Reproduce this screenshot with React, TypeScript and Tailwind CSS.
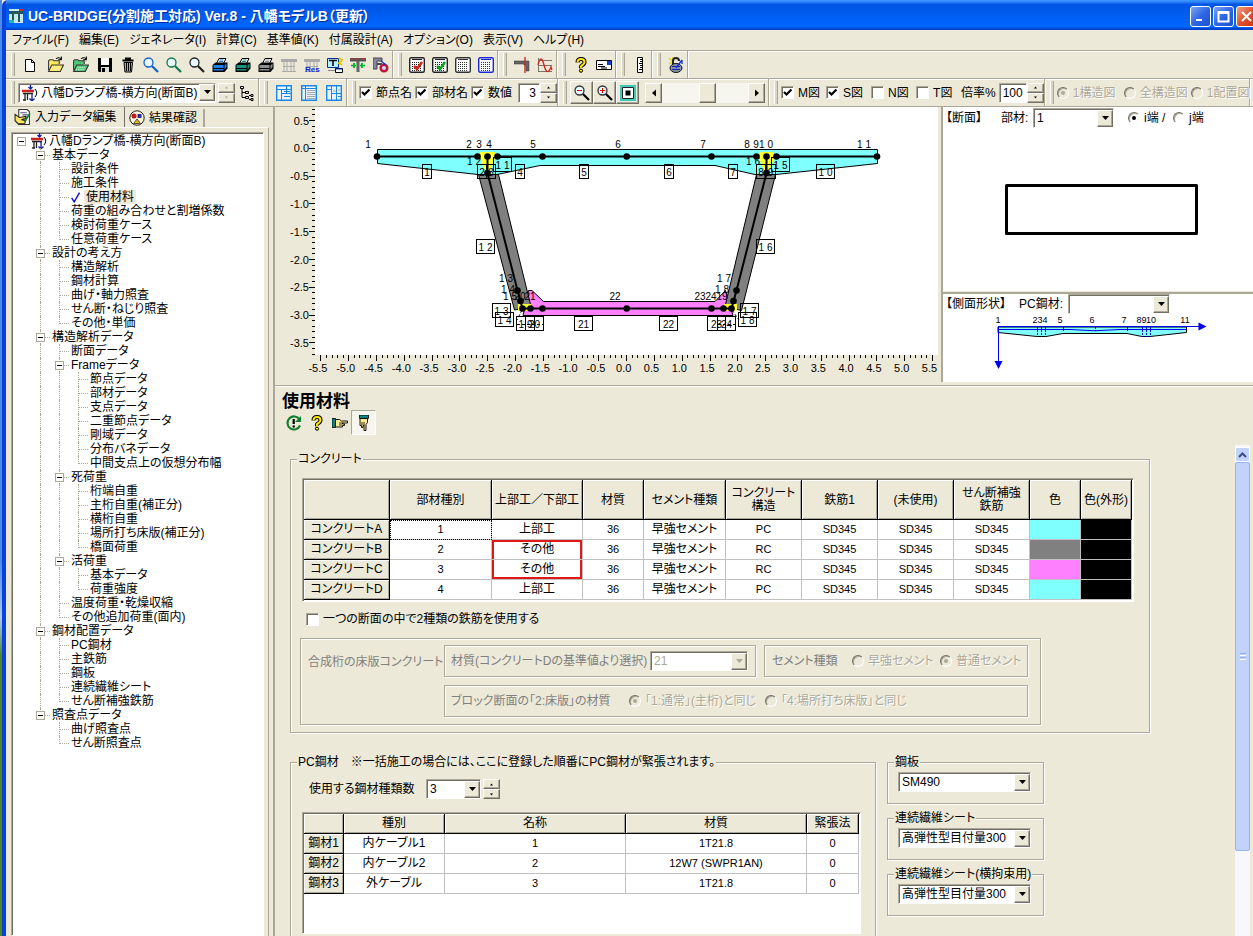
import { Fragment, ReactNode } from "react";
import clsx from "clsx";

const SUNKEN =
  "border border-t-[#aca899] border-l-[#aca899] border-b-white border-r-white shadow-[inset_1px_1px_0_#716f64]";
const RAISED =
  "border border-t-white border-l-white border-b-[#716f64] border-r-[#716f64] shadow-[inset_-1px_-1px_0_#aca899]";
const ETCHED =
  "border border-[#aca899] shadow-[1px_1px_0_#fff,inset_1px_1px_0_#fff]";
const DISABLED = "text-[#aca899] [text-shadow:1px_1px_0_#fff]";

/* ---------- icons ---------- */

const Svg = ({ children, size = 16 }: { children: ReactNode; size?: number }) => (
  <svg
    width={size}
    height={size}
    viewBox="0 0 16 16"
    fill="none"
    className="shrink-0"
    aria-hidden="true"
  >
    {children}
  </svg>
);

const NewIcon = () => (
  <Svg>
    <path d="M2.500 2.500h6l3 3v9h-9z" fill="#fff" stroke="#000" />
    <path d="M8.500 2.500v3h3" stroke="#000" />
  </Svg>
);

const FolderIcon = ({ fill }: { fill: string }) => (
  <Svg size={17}>
    <path d="M1.500 13.500v-9l1-1h3l1 1h5v3" fill={fill} stroke="#333" />
    <path d="M1.500 14.500l3-6h11l-3 6z" fill={fill} stroke="#333" />
    <path d="M8.500 2.500q3-2 5 .5m0-2.500v3h-3" stroke="#000" />
    <path d="M5 10.500h8M4 12.500h8" stroke="#fff" strokeDasharray="1 1" />
  </Svg>
);

const SaveIcon = () => (
  <Svg>
    <path d="M1 1h14v14H2l-1-1z" fill="#000" />
    <path d="M4 1h8v7H4z" fill="#fff" />
    <path d="M4 10h8v5H4z" fill="#ddd" />
    <path d="M5 11h3v4H5z" fill="#000" />
  </Svg>
);

const TrashIcon = () => (
  <Svg>
    <path d="M6 2.500v-1h4v1M2.500 3.500h11" stroke="#000" strokeWidth="2" />
    <path d="M4 5.500h8.500l-1 9.500H5z" fill="#aaa" stroke="#000" />
    <path d="M6.500 6v8M8.500 6v8M10.500 6v8" stroke="#000" />
  </Svg>
);

const LensIcon = ({ color, sign }: { color: string; sign?: "+" | "-" }) => (
  <Svg>
    <circle cx="5.500" cy="5.500" r="4.500" fill="#e8f8ff" stroke={color} strokeWidth="1.300" />
    <path d="M9 9l6 6" stroke={sign ? "#000" : color} strokeWidth="2.200" />
    {sign && <path d="M3 5.500h5" stroke="#e00000" />}
    {sign === "+" && <path d="M5.500 3v5" stroke="#e00000" />}
  </Svg>
);

const PrinterIcon = ({ color }: { color: string }) => (
  <Svg>
    <path d="M4.500 6.500l2.500-5h7l-2.500 5z" fill="#fff" stroke="#000" />
    <path d="M7.500 3h4M7 4.500h4" stroke={color} />
    <path d="M.5 8l3-2.500H15.500v6L12.500 15H.5z" fill="#000" />
    <path d="M1.500 8h10v3h-10zM1.500 12h10v1.500h-10z" fill={color} />
    <path d="M12.500 8.500l2-2V10l-2 2.500z" fill={color} />
  </Svg>
);

const PierIcon = ({ label }: { label?: string }) => (
  <Svg>
    <path d="M0 2h16v3H0z" fill="#aaa" />
    <path d="M3 5v10M6 5v10M10 5v10M13 5v10M2 9.500h12M1 14.500h14" stroke="#aaa" />
    {label && (
      <text x="1" y="15" fontSize="8" fontWeight="bold" fill="#1030e0">
        {label}
      </text>
    )}
  </Svg>
);

const SectionTableIcon = () => (
  <Svg>
    <path d="M.5 1.500h11v9H.500z" fill="#b8f0ff" stroke="#0030a0" />
    <path d="M2 3.500h8M6 4v5" stroke="#000" strokeWidth="1.500" />
    <path d="M12 1l3 2-3 3 3 2" stroke="#e8c800" strokeWidth="2" />
    <path d="M1 13.500h7" stroke="#888" />
    <path d="M8.500 11.500h7v4h-7z" fill="#fff" stroke="#000" />
    <path d="M9 12h6" stroke="#0030e0" />
  </Svg>
);

const LoadIcon = () => (
  <Svg>
    <path d="M0 1h16v3.500H0z" fill="#555" />
    <path d="M0 2h16" stroke="#a04040" />
    <path d="M6.500 4h3v11h-3z" fill="#666" />
    <path d="M1 8.500h5M10 8.500h5" stroke="#00a020" strokeWidth="1.500" />
    <path d="M4 6v5M12 6v5" stroke="#00c030" strokeWidth="2" />
  </Svg>
);

const TendonIcon = () => (
  <Svg>
    <path d="M0 1h9v3H4v8H0z" fill="#889" stroke="#445" />
    <path d="M4 7h5" stroke="#445" strokeWidth="2" />
    <circle cx="11" cy="11" r="3.300" fill="#ccd8ff" stroke="#c01838" strokeWidth="2.500" />
    <path d="M8 4l5 4" stroke="#1030c0" strokeWidth="1.500" />
  </Svg>
);

const GridIcon = ({ color, mark }: { color: string; mark?: string }) => (
  <Svg>
    <rect x=".7" y=".7" width="14.600" height="14.600" rx="1.500" fill="#fff" stroke={color} strokeWidth="1.400" />
    <path d="M3 2.500h10" stroke={color} />
    <path
      d="M3 5.500h10M3 7.500h10M3 9.500h10M3 11.500h10M3 13.500h10"
      stroke={color}
      strokeDasharray="1 1"
    />
    {mark && <path d="M5 9l3 3 5-7" stroke={mark} strokeWidth="2.500" />}
  </Svg>
);

const GirderCutIcon = () => (
  <Svg>
    <path d="M0 4h15v10h-3V9L9 7H0z" fill="#666" stroke="#333" strokeWidth=".5" />
    <path d="M11 0v16" stroke="#d02020" strokeWidth="1.300" />
  </Svg>
);

const WaveIcon = () => (
  <Svg>
    <path d="M1.500 1v14M1 8.500h14M1 14.500h14M1 3.500h14" stroke="#776" />
    <path d="M1 8q3-12 6 0t7 2l1 3" stroke="#d82020" strokeWidth="1.300" />
  </Svg>
);

const QuestionIcon = () => (
  <Svg>
    <path d="M4.500 5.500q0-3.500 3.500-3.500t3.500 3q0 2-2 3T8 11" stroke="#000" strokeWidth="4" />
    <path d="M4.500 5.500q0-3.500 3.500-3.500t3.500 3q0 2-2 3T8 11" stroke="#ffe800" strokeWidth="2" />
    <circle cx="8" cy="13.700" r="1.600" fill="#ffe800" stroke="#000" />
  </Svg>
);

const MailIcon = () => (
  <Svg>
    <path d="M.5 3.500h15v9H.500z" fill="#fff" stroke="#000" />
    <path d="M11 4h4v4h-4z" fill="#1040d0" />
    <path d="M2 7.500h5M2 9.500h7M5 11h6" stroke="#000" />
  </Svg>
);

const RulerIcon = () => (
  <Svg>
    <path d="M5.500.5h5v15h-5z" fill="#fff" stroke="#000" />
    <path d="M8 2.500h2M8 4.500h2M7 6.500h3M8 8.500h2M8 10.500h2M7 12.500h3" stroke="#000" />
  </Svg>
);

const LockIcon = () => (
  <Svg>
    <path d="M1 1l4 4M1 6h3M5 0v3" stroke="#e8d800" strokeWidth="1.500" />
    <path d="M5 8V4q0-3 3-3t3 3" stroke="#222" strokeWidth="2" />
    <ellipse cx="8" cy="11" rx="6" ry="4.500" fill="#8890a8" stroke="#111" />
    <path d="M4 9.500h8M4 12.500h8" stroke="#1020b0" />
    <path d="M8 11l6-8M14 3v4" stroke="#1030e0" strokeWidth="1.300" />
  </Svg>
);

const BridgeIcon = () => (
  <Svg>
    <path d="M0 6h12" stroke="#d02020" strokeWidth="2.500" />
    <path d="M1 8.500h10M3 9v6M5.500 9v6M1 15h3" stroke="#222" strokeWidth="1.300" />
    <path d="M8.500 0v4m-2-2l2 2 2-2M10 9v7m-2.500-2.500L10 16l2.500-2.500" stroke="#1020a0" strokeWidth="1.300" />
    <path d="M13 4q3.500 4 0 8" stroke="#000" />
  </Svg>
);

const HierarchyIcon = () => (
  <Svg>
    <path d="M1.500 1.500h3v2h-3zM6.500 6.500h3v2h-3zM6.500 11.500h3v2h-3zM12 9.500h2v2h-2zM12 13.500h2v2h-2z" stroke="#000" />
    <path d="M3 4v8.500h3M3 7.500h3M10 10.500h2M10 14.500h2" stroke="#000" />
  </Svg>
);

const LayoutIcon = ({ lines, red }: { lines: string; red?: string }) => (
  <Svg>
    <path d="M.7.700h14.600v14.600H.700z" fill="#e8f4ff" stroke="#1c86e8" strokeWidth="1.400" />
    <path d={lines} stroke="#1c86e8" />
    {red && <path d={red} stroke="#a0a8b0" />}
  </Svg>
);

const EditIcon = () => (
  <Svg size={17}>
    <path d="M4.500.5h8l2 2v12h-10z" fill="#fff" stroke="#333" />
    <path d="M6 3.500h6M8 5.500h5M9 7.500h4" stroke="#557" />
    <path d="M1 5l4 3 6-1v2l-4 1 4 1-1 3H4l-3-3z" fill="#ffe060" stroke="#222" />
    <path d="M10 12l5-8" stroke="#108020" strokeWidth="1.500" />
  </Svg>
);

const ResultIcon = () => (
  <Svg>
    <circle cx="8" cy="8" r="7.200" fill="#fff4d8" stroke="#222" />
    <circle cx="5" cy="6" r="2.500" fill="#c01818" />
    <path d="M8.500 4h4v4h-4z" fill="#2030b0" />
    <path d="M8 9l3.500 4.500h-7z" fill="#e8b020" stroke="#222" strokeWidth=".7" />
  </Svg>
);

const RefreshIcon = () => (
  <Svg>
    <path d="M13.500 4.500A6.500 6.500 0 1 0 14 10.500" stroke="#108030" strokeWidth="2.200" />
    <path d="M15 1v6H9z" fill="#108030" />
    <path d="M7.700 4v5" stroke="#000" strokeWidth="2.200" />
    <circle cx="7.700" cy="11.500" r="1.200" fill="#000" />
  </Svg>
);

const HandIcon = ({ down }: { down?: boolean }) => (
  <Svg>
    <g transform={down ? "rotate(90 8 8)" : undefined}>
      <path d="M0 3.500h3.500v9H0z" fill="#108080" stroke="#000" strokeWidth=".8" />
      <path
        d="M3.500 4.500h4l2 1.500h6v2h-5v1h2v1.500h-2V12h-7z"
        fill="#ffe890"
        stroke="#000"
        strokeWidth=".9"
      />
      <path d="M7 8h4M7 10h3" stroke="#000" strokeWidth=".8" />
    </g>
  </Svg>
);

/* ---------- controls ---------- */

const Arrow = ({ d }: { d: string }) => (
  <svg width="7" height="5" viewBox="0 0 7 5" fill="currentColor" aria-hidden="true">
    <path d={d} />
  </svg>
);

const Select = ({
  value,
  label,
  className,
  disabled,
  icon,
}: {
  value: string;
  label: string;
  className: string;
  disabled?: boolean;
  icon?: ReactNode;
}) => (
  <span className={clsx("grid h-5 shrink-0 items-center", className)}>
    <select
      aria-label={label}
      disabled={disabled}
      className={clsx(
        "col-start-1 row-start-1 h-5 w-full appearance-none bg-white pr-4 text-[12px] leading-4",
        SUNKEN,
        icon ? "pl-[22px]" : "pl-[3px]",
        disabled && "text-[#aca899]"
      )}
    >
      <option>{value}</option>
    </select>
    {icon && (
      <span className="pointer-events-none col-start-1 row-start-1 pl-1">
        {icon}
      </span>
    )}
    <span
      className={clsx(
        "pointer-events-none col-start-1 row-start-1 mr-px grid h-[17px] w-4 place-items-center justify-self-end bg-[#ece9d8]",
        RAISED,
        disabled && "text-[#aca899]"
      )}
    >
      <Arrow d="M0 0h7L3.500 4z" />
    </span>
  </span>
);

const Spinner = ({ label, disabled }: { label: string; disabled?: boolean }) => (
  <span className={clsx("flex w-[17px] flex-col", disabled && "text-[#aca899]")}>
    <button
      type="button"
      aria-label={`${label} +`}
      disabled={disabled}
      className={clsx("grid h-[10px] place-items-center", RAISED)}
    >
      <Arrow d="M2 3.500h3L3.500 1.500z" />
    </button>
    <button
      type="button"
      aria-label={`${label} -`}
      disabled={disabled}
      className={clsx("grid h-[10px] place-items-center", RAISED)}
    >
      <Arrow d="M2 1.500h3L3.500 3.500z" />
    </button>
  </span>
);

const Checkbox = ({
  text,
  checked,
  className,
}: {
  text: string;
  checked?: boolean;
  className?: string;
}) => (
  <label className={clsx("flex shrink-0 items-center gap-1 whitespace-nowrap", className)}>
    <span className="grid place-items-center">
      <input
        type="checkbox"
        defaultChecked={checked}
        className={clsx("peer col-start-1 row-start-1 size-[13px] appearance-none bg-white", SUNKEN)}
      />
      <svg
        width="9"
        height="9"
        viewBox="0 0 9 9"
        fill="none"
        className="pointer-events-none col-start-1 row-start-1 hidden peer-checked:block"
        aria-hidden="true"
      >
        <path d="M1 4l2.500 2.500L8.500 1.500" stroke="#000" strokeWidth="2.200" />
      </svg>
    </span>
    {text}
  </label>
);

const Radio = ({
  text,
  name,
  checked,
  disabled,
  className,
}: {
  text: string;
  name: string;
  checked?: boolean;
  disabled?: boolean;
  className?: string;
}) => (
  <label
    className={clsx(
      "flex shrink-0 items-center gap-1 whitespace-nowrap",
      disabled && DISABLED,
      className
    )}
  >
    <span className="grid place-items-center">
      <input
        type="radio"
        name={name}
        defaultChecked={checked}
        disabled={disabled}
        className={clsx(
          "peer col-start-1 row-start-1 size-3 appearance-none rounded-full border border-t-[#716f64] border-l-[#716f64] border-r-white border-b-white shadow-[inset_1px_1px_0_#aca899]",
          disabled ? "bg-[#ece9d8]" : "bg-white"
        )}
      />
      <span
        className={clsx(
          "pointer-events-none col-start-1 row-start-1 hidden size-1 rounded-full peer-checked:block",
          disabled ? "bg-[#aca899]" : "bg-black"
        )}
      />
    </span>
    {text}
  </label>
);

const GroupBox = ({
  title,
  className,
  bodyClassName,
  children,
}: {
  title: string;
  className: string;
  bodyClassName: string;
  children: ReactNode;
}) => (
  <fieldset className={clsx(ETCHED, className)}>
    <legend className="ml-[6px] bg-[#ece9d8] px-px leading-[14px] whitespace-nowrap">
      {title}
    </legend>
    <div className={bodyClassName}>{children}</div>
  </fieldset>
);

/* ---------- window chrome ---------- */

const CaptionButton = ({
  label,
  close,
  d,
}: {
  label: string;
  close?: boolean;
  d: string;
}) => (
  <button
    type="button"
    aria-label={label}
    className={clsx(
      "grid size-[21px] shrink-0 place-items-center rounded-[3px] border border-white",
      close
        ? "bg-linear-to-br from-[#f0a080] via-[#e0502c] to-[#c83008]"
        : "bg-linear-to-br from-[#7ba4f4] via-[#2f66e4] to-[#1d4fd0]"
    )}
  >
    <svg width="13" height="13" viewBox="0 0 13 13" fill="none" aria-hidden="true">
      <path d={d} stroke="#fff" strokeWidth="2" />
    </svg>
  </button>
);

const TitleBar = () => (
  <header className="flex h-[30px] shrink-0 items-center bg-linear-to-b from-[#3a93ff] from-3% via-[#0054e3] via-15% to-[#0066ff] to-85% pt-[2px] pl-[2px] text-white shadow-[inset_0_-3px_2px_-1px_#0040c8]">
    <Svg>
      <path d="M1 1h14v14H1z" fill="#c8e8e8" />
      <path d="M1 3h14v3H1zM4 6h2v8H4zM10 6h2v8h-2z" fill="#205860" />
      <path d="M1 12h5v3H1z" fill="#28b0c0" />
      <path d="M11 1h4v2h-4z" fill="#c03030" />
    </Svg>
    <h1 className="flex-1 pl-1 text-[14px] leading-5 font-bold whitespace-nowrap [text-shadow:1px_1px_0_#0030a0]">
      UC-BRIDGE(分割施工対応) Ver.8 - 八幡モデルB（更新）
    </h1>
    <div className="-mr-1 flex gap-[2px]">
      <CaptionButton label="最小化" d="M2 10h6" />
      <CaptionButton label="最大化" d="M1.500 2h10v9.500h-10zM1.500 3h10" />
      <CaptionButton label="閉じる" close d="M2 2l9 9M11 2l-9 9" />
    </div>
  </header>
);

const menuList = [
  "ファイル(F)",
  "編集(E)",
  "ジェネレータ(I)",
  "計算(C)",
  "基準値(K)",
  "付属設計(A)",
  "オプション(O)",
  "表示(V)",
  "ヘルプ(H)",
];

const MenuBar = () => (
  <nav className="flex h-5 shrink-0 items-center gap-[10px] pl-[6px]">
    {menuList.map((item) => (
      <button type="button" key={item} className="whitespace-nowrap">
        {item}
      </button>
    ))}
  </nav>
);

const ToolGroup = ({ children }: { children: ReactNode }) => (
  <div className="flex h-full shrink-0 items-center border-r border-[#aca899] pl-[5px] shadow-[1px_0_0_#fff]">
    <span className="mr-[3px] h-[23px] w-1 border-x border-x-white border-r-[#aca899] bg-[#d8d4c4]" />
    {children}
  </div>
);

const ToolButton = ({
  label,
  wide,
  children,
}: {
  label: string;
  wide?: boolean;
  children: ReactNode;
}) => (
  <button
    type="button"
    title={label}
    className={clsx("grid h-[23px] shrink-0 place-items-center", wide ? "w-[25px]" : "w-[23px]")}
  >
    {children}
  </button>
);

const toolGroups: { label: string; icon: ReactNode; wide?: boolean }[][] = [
  [
    { label: "新規作成", icon: <NewIcon />, wide: true },
    { label: "開く", icon: <FolderIcon fill="#ffe860" />, wide: true },
    { label: "追加読込", icon: <FolderIcon fill="#50c878" />, wide: true },
    { label: "保存", icon: <SaveIcon /> },
    { label: "削除", icon: <TrashIcon /> },
    { label: "入力データ表示", icon: <LensIcon color="#1060d0" /> },
    { label: "結果表示", icon: <LensIcon color="#107850" /> },
    { label: "表示", icon: <LensIcon color="#222222" /> },
    { label: "入力データ印刷", icon: <PrinterIcon color="#2080e8" /> },
    { label: "結果印刷", icon: <PrinterIcon color="#209080" /> },
    { label: "印刷", icon: <PrinterIcon color="#909090" /> },
    { label: "構造図", icon: <PierIcon /> },
    { label: "結果図", icon: <PierIcon label="Res" /> },
    { label: "断面表", icon: <SectionTableIcon /> },
    { label: "荷重図", icon: <LoadIcon /> },
    { label: "鋼材図", icon: <TendonIcon /> },
  ],
  [
    { label: "データチェック", icon: <GridIcon color="#222222" mark="#e02020" /> },
    { label: "データ編集", icon: <GridIcon color="#222222" mark="#10a020" /> },
    { label: "計算", icon: <GridIcon color="#333333" /> },
    { label: "一括計算", icon: <GridIcon color="#1828d8" /> },
  ],
  [
    { label: "断面", icon: <GirderCutIcon /> },
    { label: "断面力図", icon: <WaveIcon /> },
  ],
  [
    { label: "ヘルプ", icon: <QuestionIcon /> },
    { label: "問い合わせ", icon: <MailIcon /> },
  ],
  [{ label: "寸法", icon: <RulerIcon /> }],
  [{ label: "ライセンス", icon: <LockIcon /> }],
];

const MainToolBar = () => (
  <div className="flex h-7 shrink-0 border-t border-[#aca899] shadow-[inset_0_1px_0_#fff]">
    {toolGroups.map((group, index) => (
      <ToolGroup key={index}>
        {group.map((tool) => (
          <ToolButton key={tool.label} label={tool.label} wide={tool.wide}>
            {tool.icon}
          </ToolButton>
        ))}
      </ToolGroup>
    ))}
  </div>
);

const ViewToolBar = () => (
  <div className="flex h-7 shrink-0 border-t border-[#aca899] shadow-[inset_0_1px_0_#fff]">
    <ToolGroup>
      <Select
        label="モデル"
        value="八幡Dランプ橋-横方向(断面B)"
        className="mr-[2px] w-[198px]"
        icon={<BridgeIcon />}
      />
      <Spinner label="モデル" disabled />
      <ToolButton label="ツリー">
        <HierarchyIcon />
      </ToolButton>
    </ToolGroup>
    <ToolGroup>
      <ToolButton label="分割表示" wide>
        <LayoutIcon lines="M1 4.500h14M5.500 4v11M10.500 1v8M6 8.500h9M8 6.500h6M8 11.500h6" />
      </ToolButton>
      <ToolButton label="一覧表示" wide>
        <LayoutIcon
          lines="M4.500 1v14M1 3.500h14"
          red="M6 5.500h8M6 7.500h8M6 9.500h8M6 11.500h8M6 13.500h8"
        />
      </ToolButton>
      <ToolButton label="左右表示" wide>
        <LayoutIcon
          lines="M5.500 1v14M10.500 1v14M1 4.500h4M6 8.500h9M12 11.500h3"
          red="M7 6h3M12 5h2"
        />
      </ToolButton>
    </ToolGroup>
    <ToolGroup>
      <div className="flex items-center gap-[3px]">
        <Checkbox text="節点名" checked />
        <Checkbox text="部材名" checked />
        <Checkbox text="数値" checked />
      </div>
      <input
        aria-label="小数桁数"
        defaultValue="3"
        className={clsx("ml-[6px] h-5 w-[22px] bg-white pr-[3px] text-right", SUNKEN)}
      />
      <Spinner label="小数桁数" />
    </ToolGroup>
    <ToolGroup>
      <button type="button" title="縮小" className={clsx("grid size-[23px] place-items-center", RAISED)}>
        <LensIcon color="#333333" sign="-" />
      </button>
      <button type="button" title="拡大" className={clsx("grid size-[23px] place-items-center", RAISED)}>
        <LensIcon color="#333333" sign="+" />
      </button>
      <button type="button" title="全体" className={clsx("grid size-[23px] place-items-center", RAISED)}>
        <Svg>
          <path d="M1 1h14v14H1z" fill="#fff" stroke="#40c8b8" strokeWidth="2" />
          <path d="M2.500 2.500h11v11h-11z" stroke="#222" />
          <path d="M5.500 5.500h5v5h-5z" fill="#000" />
        </Svg>
      </button>
      <div className="mr-[3px] ml-[6px] flex h-5 w-[120px] items-stretch bg-[#f6f5ee]">
        <button type="button" aria-label="左へ" className={clsx("grid w-[17px] place-items-center bg-[#ece9d8]", RAISED)}>
          <Svg size={8}>
            <path d="M12 1v14L4 8z" fill="#000" />
          </Svg>
        </button>
        <span className="flex flex-1 justify-center pl-5">
          <span className={clsx("w-[17px] bg-[#ece9d8]", RAISED)} />
        </span>
        <button type="button" aria-label="右へ" className={clsx("ml-4 grid w-[17px] place-items-center bg-[#ece9d8]", RAISED)}>
          <Svg size={8}>
            <path d="M4 1v14l8-7z" fill="#000" />
          </Svg>
        </button>
      </div>
    </ToolGroup>
    <ToolGroup>
      <Checkbox text="M図" checked className="w-[45px]" />
      <Checkbox text="S図" checked className="w-[45px]" />
      <Checkbox text="N図" className="w-[45px]" />
      <Checkbox text="T図" className="w-[45px]" />
      <label className="flex items-center gap-[3px]">
        倍率%
        <input defaultValue="100" className={clsx("h-5 w-7 bg-white pr-[3px] text-right", SUNKEN)} />
      </label>
      <Spinner label="倍率" />
    </ToolGroup>
    <ToolGroup>
      <Radio name="figure" text="1構造図" checked disabled className="w-[67px]" />
      <Radio name="figure" text="全構造図" disabled className="w-[67px]" />
      <Radio name="figure" text="1配置図" disabled />
    </ToolGroup>
  </div>
);

/* ---------- tree ---------- */

type TreeNode = {
  name: string;
  selected?: boolean;
  items?: TreeNode[];
};

const leaves = (...names: string[]): TreeNode[] => names.map((name) => ({ name }));

const tree: TreeNode = {
  name: "八幡Dランプ橋-横方向(断面B)",
  items: [
    {
      name: "基本データ",
      items: [
        ...leaves("設計条件", "施工条件"),
        { name: "使用材料", selected: true },
        ...leaves("荷重の組み合わせと割増係数", "検討荷重ケース", "任意荷重ケース"),
      ],
    },
    {
      name: "設計の考え方",
      items: leaves("構造解析", "鋼材計算", "曲げ・軸力照査", "せん断・ねじり照査", "その他・単価"),
    },
    {
      name: "構造解析データ",
      items: [
        { name: "断面データ" },
        {
          name: "Frameデータ",
          items: leaves(
            "節点データ",
            "部材データ",
            "支点データ",
            "二重節点データ",
            "剛域データ",
            "分布バネデータ",
            "中間支点上の仮想分布幅"
          ),
        },
        {
          name: "死荷重",
          items: leaves("桁端自重", "主桁自重(補正分)", "横桁自重", "場所打ち床版(補正分)", "橋面荷重"),
        },
        { name: "活荷重", items: leaves("基本データ", "荷重強度") },
        ...leaves("温度荷重・乾燥収縮", "その他追加荷重(面内)"),
      ],
    },
    {
      name: "鋼材配置データ",
      items: leaves("PC鋼材", "主鉄筋", "鋼板", "連続繊維シート", "せん断補強鉄筋"),
    },
    { name: "照査点データ", items: leaves("曲げ照査点", "せん断照査点") },
  ],
};

// trail: for every ancestor, whether its vertical guide goes on below this row
const TreeItem = ({
  node,
  trail,
  last,
}: {
  node: TreeNode;
  trail: boolean[];
  last: boolean;
}) => {
  const root = trail.length === 0;
  return (
    <li>
      <div className="flex h-[14px] items-center">
        {trail.map((goesOn, index) => (
          <span key={index} className="h-full w-[19px] shrink-0">
            <span
              className={clsx("block h-full w-[10px]", goesOn && "border-r border-dotted border-[#aca899]")}
            />
          </span>
        ))}
        <span className="grid h-full w-[19px] shrink-0">
          {!root && (
            <span className="col-start-1 row-start-1 flex">
              <span
                className={clsx("w-[10px] border-r border-dotted border-[#aca899]", last ? "h-2" : "h-full")}
              />
              <span className="h-2 flex-1 border-b border-dotted border-[#aca899]" />
            </span>
          )}
          {node.items && (
            <button
              type="button"
              aria-label={`${node.name}を閉じる`}
              className="col-start-1 row-start-1 mt-px grid size-[9px] place-items-center place-self-center border border-[#aca899] bg-white"
            >
              <span className="h-px w-[5px] bg-black" />
            </button>
          )}
        </span>
        {root && <BridgeIcon />}
        {node.selected && (
          <Svg size={14}>
            <path d="M3 9l3 4.500L12 3" stroke="#1010c8" strokeWidth="1.600" />
          </Svg>
        )}
        <span
          className={clsx(
            "px-[2px] leading-[14px] whitespace-nowrap",
            node.selected && "ml-px bg-[#ece9d8]"
          )}
        >
          {node.name}
        </span>
      </div>
      {node.items && (
        <ul>
          {node.items.map((item, index) => (
            <TreeItem
              key={item.name}
              node={item}
              trail={root ? [false] : [...trail, !last]}
              last={index === node.items!.length - 1}
            />
          ))}
        </ul>
      )}
    </li>
  );
};

const Sidebar = () => (
  <aside className="flex w-[267px] shrink-0 flex-col pr-1 pl-px">
    <div className="flex h-5 shrink-0 items-end">
      <button
        type="button"
        className="flex h-full w-[118px] items-center gap-1 border-r border-[#716f64] pl-[7px] whitespace-nowrap"
      >
        <EditIcon />
        入力データ編集
      </button>
      <button
        type="button"
        className="flex h-[18px] w-[80px] items-center gap-1 border-r-2 border-[#aca899] pl-1 whitespace-nowrap"
      >
        <ResultIcon />
        結果確認
      </button>
    </div>
    <div className="flex min-h-0 flex-1 border-t border-r border-t-white border-r-[#aca899] pt-1 pr-1 pl-1">
      <ul className={clsx("w-full overflow-hidden bg-white pt-px", SUNKEN)}>
        <TreeItem node={tree} trail={[]} last />
      </ul>
    </div>
  </aside>
);

/* ---------- frame model ---------- */

const SCALE = 55.6;
const ORIGIN_X = 626.7;
const ORIGIN_Y = 148.3;

const range = (from: number, to: number) =>
  Array.from({ length: to - from + 1 }, (_, index) => from + index);

const topNodes = [377, 477.5, 487.5, 497.5, 542.5, 626.7, 711.5, 756.5, 766.5, 776.5, 877];
const nodes: [number, number][] = [
  ...topNodes.map((x): [number, number] => [x, 156.5]),
  ...[522.5, 530.5, 542.5, 626.7, 711.5, 723.5, 731.5].map((x): [number, number] => [x, 308.5]),
  [487.5, 173],
  [766.5, 173],
  [517.5, 290.5],
  [520.5, 301],
  [736.5, 290.5],
  [733.5, 301],
];

const nodeLabels: [string, number, number][] = [
  ["1", 368, 148],
  ["2", 469, 148],
  ["3", 479, 148],
  ["4", 489, 148],
  ["5", 533, 148],
  ["6", 618, 148],
  ["7", 703, 148],
  ["8", 747, 148],
  ["9", 756, 148],
  ["1 0", 766, 148],
  ["1 1", 864, 148],
  ["1 2", 474, 165],
  ["1 6", 753, 165],
  ["1 3", 506, 282],
  ["1 4", 508, 293],
  ["1 5", 510, 300],
  ["20", 520, 300],
  ["21", 530, 300],
  ["22", 615, 300],
  ["1 7", 724, 282],
  ["1 8", 722, 293],
  ["23", 700, 300],
  ["24", 711, 300],
  ["19", 722, 300],
];

// text, left, top, width
const members: [string, number, number, number][] = [
  ["1", 422.5, 164.5, 9],
  ["2", 477.5, 164.5, 9],
  ["3", 486.5, 164.5, 9],
  ["4", 515.5, 164.5, 9],
  ["5", 579.5, 164.5, 9],
  ["6", 664.5, 164.5, 9],
  ["7", 728.5, 164.5, 9],
  ["8", 756.5, 164.5, 9],
  ["9", 765.5, 164.5, 10],
  ["1 0", 816.5, 164.5, 18],
  ["1 1", 493.5, 157.5, 18],
  ["1 5", 771.5, 157.5, 18],
  ["1 2", 476.5, 239.5, 18],
  ["1 6", 756.5, 239.5, 18],
  ["1 3", 492.5, 303.5, 18],
  ["1 4", 495.5, 312.5, 18],
  ["1 9", 516.5, 316.5, 18],
  ["20", 525.5, 316.5, 18],
  ["21", 574.5, 316.5, 18],
  ["22", 659.5, 316.5, 18],
  ["23", 707.5, 316.5, 18],
  ["24", 717.5, 316.5, 18],
  ["1 7", 740.5, 303.5, 18],
  ["1 8", 738.5, 312.5, 18],
];

const FrameModel = () => (
  <svg
    width="663"
    height="275"
    viewBox="275 107 663 275"
    className="shrink-0 text-[11px]"
    role="img"
    aria-label="構造モデル図"
  >
    <path d="M275 107h40v248h623v27H275z" fill="#ece9d8" />

    {/* rulers */}
    <g stroke="#000" shapeRendering="crispEdges">
      {range(-37, 7).map((step) => {
        const y = ORIGIN_Y - (step / 10) * SCALE;
        return <path key={step} d={`M${step % 5 ? 312 : 309} ${y}H315`} />;
      })}
      {range(-55, 55).map((step) => {
        const x = ORIGIN_X + (step / 10) * SCALE;
        return <path key={step} d={`M${x} 355V${step % 5 ? 358 : 361}`} />;
      })}
    </g>
    {range(-7, 1).map((half) => (
      <text key={half} x="309" y={ORIGIN_Y - (half / 2) * SCALE + 4} textAnchor="end">
        {(half / 2).toFixed(1)}
      </text>
    ))}
    {range(-11, 11).map((half) => (
      <text key={half} x={ORIGIN_X + (half / 2) * SCALE - 3} y="372" textAnchor="middle">
        {(half / 2).toFixed(1)}
      </text>
    ))}

    {/* slabs and webs */}
    <g stroke="#000">
      <path
        d="M377.500 149.500H877.500V163.500L776 174.500H755L715 165.500H540L497 174.500H478L377.500 163.500z"
        fill="#80ffff"
      />
      <path
        d="M523 315.500L528.500 290.500H532L543.500 301.500H715L725.500 290.500L733 315.500z"
        fill="#ff80ff"
      />
      <path d="M478.500 174.500H498.500L531 306.500L514.500 310z" fill="#808080" />
      <path d="M756.500 174.500H775.500L741.500 310.500L725 306.500z" fill="#808080" />
    </g>
    <path d="M480 152h15v6l-6 16h-3l-6-16zM759 152h15v6l-6 16h-3l-6-16z" fill="#ffff30" />
    <path d="M518 304h13v7h-13zM724 304h13v7h-13z" fill="#ffff30" />

    {/* members */}
    <g stroke="#000" strokeWidth="2" fill="none">
      <path d="M377 156.500H477M497 156.500H757M776 156.500H877" />
      <path d="M522 308.500H732" />
      <path d="M487.500 156V173L517.500 290.500L522.500 308.500M766.500 156V173L736.500 290.500L731.500 308.500" />
    </g>
    <path
      d="M517 324.500h26M718 324.500h20M522 310l-5 10M732 310l7 10"
      stroke="#000"
      strokeDasharray="3 2"
    />
    {nodes.map(([x, y]) => (
      <circle key={`${x}-${y}`} cx={x} cy={y} r="3.300" />
    ))}

    <g className="text-[10px]">
      {nodeLabels.map(([text, x, y]) => (
        <text key={text} x={x} y={y} textAnchor="middle">
          {text}
        </text>
      ))}
      {members.map(([text, x, y, width]) => (
        <Fragment key={text}>
          <rect
            x={x}
            y={y}
            width={width}
            height="14"
            fill={text === "1 2" ? "#fff" : "none"}
            stroke="#000"
          />
          {text === "1 6" && <path d="M762 240h12v13h-15z" fill="#fff" />}
          <text x={x + width / 2} y={y + 11} textAnchor="middle">
            {text}
          </text>
        </Fragment>
      ))}
    </g>
  </svg>
);

const sideTicks: [string, number][] = [
  ["1", 998],
  ["2", 1035],
  ["3", 1040],
  ["4", 1045],
  ["5", 1060],
  ["6", 1092],
  ["7", 1124],
  ["8", 1139],
  ["9", 1144],
  ["10", 1151],
  ["11", 1185],
];

const SideShape = () => (
  <svg
    width="300"
    height="66"
    viewBox="943 314 300 66"
    className="text-[9px]"
    role="img"
    aria-label="側面形状図"
  >
    <path
      d="M998 327H1186.500V332.500L1150 336.500H1142L1127 333.500H1063L1046 336.500H1037L998 332.500z"
      fill="#80ffff"
      stroke="#000"
    />
    <path
      d="M1037.500 327v10M1041.500 327v10M1045.500 327v10M1063.500 327v4M1095.500 327v4M1127.500 327v4M1142.500 327v10M1146.500 327v10M1150.500 327v10"
      stroke="#1010c0"
      strokeDasharray="2 1"
    />
    <path d="M998 329.500H1070Q1095 332 1120 329.500H1187" stroke="#0000e0" fill="none" />
    <path d="M998.500 364V326.500H1200" stroke="#0000f0" fill="none" />
    <path d="M1206.500 326.500l-8-4v8zM998.500 369l-4-8h8z" fill="#0000f0" />
    {sideTicks.map(([text, x]) => (
      <text key={text} x={x} y="323" textAnchor="middle">
        {text}
      </text>
    ))}
  </svg>
);

const SectionPane = () => (
  <div className="flex w-[312px] shrink-0 flex-col border-l-2 border-[#aca899]">
    <section className="h-[184px] shrink-0 bg-white">
      <div className="flex h-[22px] items-center">
        <h2 className="w-[58px] shrink-0 pl-[3px]">【断面】</h2>
        <span className="w-8 shrink-0">部材:</span>
        <Select label="部材" value="1" className="w-[81px]" />
        <Radio name="end" text="i端 /" checked className="ml-[14px] w-[45px]" />
        <Radio name="end" text="j端" />
      </div>
      <svg width="300" height="160" viewBox="943 129 300 160" aria-hidden="true">
        <rect x="1006.500" y="185.500" width="190" height="48" fill="#fff" stroke="#000" strokeWidth="3" strokeLinejoin="round" />
      </svg>
    </section>
    <section className="mt-px flex-1 border-t-2 border-[#aca899] bg-white">
      <div className="flex h-5 items-center">
        <h2 className="w-[76px] shrink-0 pl-[3px]">【側面形状】</h2>
        <span className="w-[49px] shrink-0">PC鋼材:</span>
        <Select label="PC鋼材" value="" className="w-[102px]" />
      </div>
      <SideShape />
    </section>
  </div>
);

/* ---------- material form ---------- */

const TH =
  "border-r border-b border-black bg-[#ece9d8] p-0 text-center leading-[13px] font-normal shadow-[inset_1px_1px_0_#fff,inset_-1px_-1px_0_#aca899]";
const TD = "border-r border-b border-[#c0c0c0] p-0 text-center leading-[13px] whitespace-nowrap";

const concreteColumns = [
  { title: "", width: "w-[86px]" },
  { title: "部材種別", width: "w-[102px]" },
  { title: "上部工／下部工", width: "w-[91px]" },
  { title: "材質", width: "w-[61px]" },
  { title: "セメント種類", width: "w-[82px]" },
  { title: "コンクリート\n構造", width: "w-[76px]" },
  { title: "鉄筋1", width: "w-[76px]" },
  { title: "(未使用)", width: "w-[76px]" },
  { title: "せん断補強\n鉄筋", width: "w-[76px]" },
  { title: "色", width: "w-[51px]" },
  { title: "色(外形)", width: "w-[51px]" },
];

const concreteRows = [
  { name: "コンクリートA", part: "上部工", type: "PC", color: "bg-[#80ffff]" },
  { name: "コンクリートB", part: "その他", type: "RC", color: "bg-[#808080]" },
  { name: "コンクリートC", part: "その他", type: "RC", color: "bg-[#ff80ff]" },
  { name: "コンクリートD", part: "上部工", type: "PC", color: "bg-[#80ffff]" },
];

// red frame round the two cells that differ from the main structure
const partMark = [
  "",
  "shadow-[inset_2px_2px_0_#e01818,inset_-2px_0_0_#e01818]",
  "shadow-[inset_2px_-2px_0_#e01818,inset_-2px_0_0_#e01818]",
  "",
];

const ConcreteTable = () => (
  <div className={clsx("ml-[2px] w-[832px] bg-white p-px", SUNKEN)}>
    <table className="w-[828px] table-fixed border-separate border-spacing-0">
      <thead>
        <tr className="h-10">
          {concreteColumns.map(({ title, width }) => (
            <th key={title} className={clsx(TH, width, "pt-px whitespace-pre")}>
              {title}
            </th>
          ))}
        </tr>
      </thead>
      <tbody>
        {concreteRows.map((row, index) => (
          <tr key={row.name} className="h-5">
            <th scope="row" className={clsx(TH, "whitespace-nowrap")}>
              {row.name}
            </th>
            <td
              className={clsx(
                TD,
                "text-[11px]",
                index === 0 && "outline-1 -outline-offset-1 outline-black outline-dotted"
              )}
            >
              {index + 1}
            </td>
            <td className={clsx(TD, partMark[index])}>{row.part}</td>
            <td className={clsx(TD, "text-[11px]")}>36</td>
            <td className={TD}>早強セメント</td>
            <td className={clsx(TD, "text-[11px]")}>{row.type}</td>
            <td className={clsx(TD, "text-[11px]")}>SD345</td>
            <td className={clsx(TD, "text-[11px]")}>SD345</td>
            <td className={clsx(TD, "text-[11px]")}>SD345</td>
            <td className={clsx(TD, row.color)} />
            <td className={clsx(TD, "bg-black")} />
          </tr>
        ))}
      </tbody>
    </table>
  </div>
);

const DeckSettings = () => (
  <div className={clsx("mt-3 flex h-[87px] w-[741px] pt-[6px] pl-[7px] text-[#808080]", ETCHED)}>
    <span className="w-[136px] shrink-0 pt-[9px] leading-4 whitespace-nowrap">
      合成桁の床版コンクリート
    </span>
    <div className="flex w-[584px] flex-col gap-2">
      <div className="flex gap-2">
        <div className={clsx("flex h-8 w-[312px] items-center justify-between pr-[7px] pl-[6px] whitespace-nowrap", ETCHED)}>
          材質(コンクリートDの基準値より選択)
          <Select label="材質" value="21" disabled className="w-[98px]" />
        </div>
        <div className={clsx("flex h-8 flex-1 items-center pl-[7px]", ETCHED)}>
          <span className="w-[80px] shrink-0">セメント種類</span>
          <Radio name="cement" text="早強セメント" disabled className="w-[88px]" />
          <Radio name="cement" text="普通セメント" checked disabled />
        </div>
      </div>
      <div className={clsx("flex h-8 items-center pl-[6px]", ETCHED)}>
        <span className="w-[178px] shrink-0">ブロック断面の「2:床版」の材質</span>
        <Radio name="deck" text="「1:通常」(主桁)と同じ" checked disabled className="w-[136px]" />
        <Radio name="deck" text="「4:場所打ち床版」と同じ" disabled />
      </div>
    </div>
  </div>
);

const tendonColumns = [
  { title: "", width: "w-[40px]" },
  { title: "種別", width: "w-[101px]" },
  { title: "名称", width: "w-[181px]" },
  { title: "材質", width: "w-[181px]" },
  { title: "緊張法", width: "w-[52px]" },
];

const tendonRows = [
  ["鋼材1", "内ケーブル1", "1", "1T21.8", "0"],
  ["鋼材2", "内ケーブル2", "2", "12W7 (SWPR1AN)", "0"],
  ["鋼材3", "外ケーブル", "3", "1T21.8", "0"],
];

const TendonTable = () => (
  <div className={clsx("mt-[13px] ml-[2px] h-[122px] w-[559px] bg-white p-px", SUNKEN)}>
    <table className="w-[555px] table-fixed border-separate border-spacing-0">
      <thead>
        <tr className="h-5">
          {tendonColumns.map(({ title, width }) => (
            <th key={title} className={clsx(TH, width)}>
              {title}
            </th>
          ))}
        </tr>
      </thead>
      <tbody>
        {tendonRows.map(([name, kind, ...rest]) => (
          <tr key={name} className="h-5">
            <th scope="row" className={clsx(TH, "whitespace-nowrap")}>
              {name}
            </th>
            <td className={TD}>{kind}</td>
            {rest.map((value, index) => (
              <td key={index} className={clsx(TD, "text-[11px]")}>
                {value}
              </td>
            ))}
          </tr>
        ))}
      </tbody>
    </table>
  </div>
);

const sheets = [
  { title: "鋼板", value: "SM490" },
  { title: "連続繊維シート", value: "高弾性型目付量300" },
  { title: "連続繊維シート(横拘束用)", value: "高弾性型目付量300" },
];

const ScrollBar = () => (
  <div className="mr-[3px] flex w-[15px] shrink-0 flex-col bg-[#f8f8fc] pt-[2px]">
    <button
      type="button"
      aria-label="上へ"
      className="grid h-[15px] place-items-center rounded-xs border border-white bg-[#c1d3fb]"
    >
      <svg width="9" height="6" viewBox="0 0 9 6" fill="none" aria-hidden="true">
        <path d="M1 5l3.500-3.500L8 5" stroke="#3c5088" strokeWidth="2" />
      </svg>
    </button>
    <div className="grid h-[389px] place-items-center rounded-xs border border-[#98b4ee] bg-[#c1d3fb]">
      <span className="flex flex-col gap-px">
        <span className="h-px w-[6px] bg-[#8cb0f8]" />
        <span className="h-px w-[6px] bg-white" />
        <span className="h-px w-[6px] bg-[#8cb0f8]" />
        <span className="h-px w-[6px] bg-white" />
      </span>
    </div>
  </div>
);

const MaterialForm = () => (
  <main className="flex min-h-0 flex-1 flex-col border-t border-[#aca899] shadow-[inset_0_1px_0_#fff]">
    <div className="shrink-0 pt-[6px] pl-[7px]">
      <h2 className="text-[17px] leading-[19px] font-bold">使用材料</h2>
      <div className="flex h-[23px] items-center">
        <ToolButton label="更新">
          <RefreshIcon />
        </ToolButton>
        <ToolButton label="ヘルプ">
          <QuestionIcon />
        </ToolButton>
        <ToolButton label="次へ">
          <HandIcon />
        </ToolButton>
        <span className="border border-t-[#aca899] border-r-white border-b-white border-l-[#aca899] bg-[#f6f5ee]">
          <ToolButton label="固定">
            <HandIcon down />
          </ToolButton>
        </span>
      </div>
    </div>
    <div className="mt-[11px] flex min-h-0 flex-1">
      <form className="min-w-0 flex-1 overflow-hidden pt-[7px] pl-[15px]">
        <GroupBox title="コンクリート" className="w-[860px]" bodyClassName="pt-3 pb-[7px] pl-[9px]">
          <ConcreteTable />
          <Checkbox
            text="一つの断面の中で2種類の鉄筋を使用する"
            className="mt-[10px] ml-[6px] h-[14px]"
          />
          <DeckSettings />
        </GroupBox>
        <div className="mt-[22px] flex items-start gap-[11px]">
          <GroupBox
            title="PC鋼材　※一括施工の場合には、ここに登録した順番にPC鋼材が緊張されます。"
            className="w-[586px]"
            bodyClassName="pt-[10px] pb-5 pl-[9px]"
          >
            <div className="flex items-center gap-[2px] pl-[9px]">
              <span className="w-[115px]">使用する鋼材種類数</span>
              <Select label="使用する鋼材種類数" value="3" className="w-[55px]" />
              <Spinner label="使用する鋼材種類数" />
            </div>
            <TendonTable />
          </GroupBox>
          <div className="flex w-[157px] flex-col gap-[7px]">
            {sheets.map(({ title, value }) => (
              <GroupBox key={title} title={title} className="h-[49px]" bodyClassName="pt-[3px] pl-[10px]">
                <Select label={title} value={value} className="w-[133px]" />
              </GroupBox>
            ))}
          </div>
        </div>
      </form>
      <ScrollBar />
    </div>
  </main>
);

const App = () => (
  <div className="flex h-screen overflow-hidden bg-[#ece9d8] font-['Liberation_Sans','Noto_Sans_CJK_JP',sans-serif] text-[12px] leading-4 text-black [font-feature-settings:'palt']">
    <div className="w-[2px] shrink-0 bg-linear-to-b from-[#4a8ae8] from-60% via-[#a8c8f0] via-66% to-[#4c8a20] to-70%" />
    <div className="flex min-w-0 flex-1 flex-col overflow-hidden rounded-tl-md border-l-4 border-[#0842dc]">
      <TitleBar />
      <MenuBar />
      <MainToolBar />
      <ViewToolBar />
      <div className="flex min-h-0 flex-1 border-t border-[#aca899]">
        <Sidebar />
        <div className="flex min-w-0 flex-1 flex-col border-l-2 border-[#aca899]">
          <div className="mb-[3px] flex h-[275px] shrink-0">
            <div className="flex min-w-0 flex-1 overflow-hidden bg-white">
              <FrameModel />
            </div>
            <div className="w-[3px] shrink-0" />
            <SectionPane />
          </div>
          <MaterialForm />
        </div>
      </div>
    </div>
  </div>
);

export default App;
